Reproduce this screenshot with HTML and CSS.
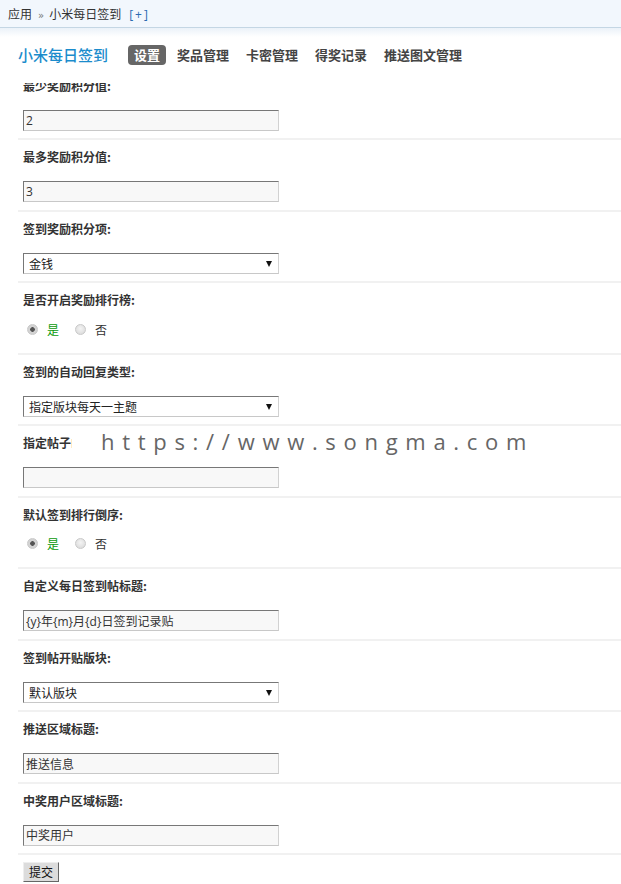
FILE: index.html
```html
<!DOCTYPE html>
<html lang="zh-CN">
<head>
<meta charset="utf-8">
<title>小米每日签到</title>
<link rel="stylesheet" href="styles.css">
</head>
<body>
<div class="header">
  <div class="crumb">应用<span class="sep">»</span>小米每日签到<a class="add">[+]</a></div>
  <div class="titlebar">
    <h3 class="title">小米每日签到</h3>
    <ul class="tabs">
      <li class="tab on">设置</li>
      <li class="tab">奖品管理</li>
      <li class="tab">卡密管理</li>
      <li class="tab">得奖记录</li>
      <li class="tab">推送图文管理</li>
    </ul>
  </div>
</div>

<form class="main">
  <div class="row">
    <div class="lbl">最少奖励积分值:</div>
    <div class="fld"><input class="txt" type="text" value="2"></div>
  </div>
  <div class="row">
    <div class="lbl">最多奖励积分值:</div>
    <div class="fld"><input class="txt" type="text" value="3"></div>
  </div>
  <div class="row">
    <div class="lbl">签到奖励积分项:</div>
    <div class="fld"><span class="sel"><select><option>金钱</option></select></span></div>
  </div>
  <div class="row">
    <div class="lbl">是否开启奖励排行榜:</div>
    <div class="fld radios">
      <label class="opt checked"><input type="radio" name="r1" checked>是</label>
      <label class="opt"><input type="radio" name="r1">否</label>
    </div>
  </div>
  <div class="row">
    <div class="lbl">签到的自动回复类型:</div>
    <div class="fld"><span class="sel"><select><option>指定版块每天一主题</option></select></span></div>
  </div>
  <div class="row">
    <div class="lbl">指定帖子ID:</div>
    <div class="fld"><input class="txt" type="text" value=""></div>
  </div>
  <div class="row">
    <div class="lbl">默认签到排行倒序:</div>
    <div class="fld radios">
      <label class="opt checked"><input type="radio" name="r2" checked>是</label>
      <label class="opt"><input type="radio" name="r2">否</label>
    </div>
  </div>
  <div class="row">
    <div class="lbl">自定义每日签到帖标题:</div>
    <div class="fld"><input class="txt" type="text" value="{y}年{m}月{d}日签到记录贴"></div>
  </div>
  <div class="row">
    <div class="lbl">签到帖开贴版块:</div>
    <div class="fld"><span class="sel"><select><option>默认版块</option></select></span></div>
  </div>
  <div class="row">
    <div class="lbl">推送区域标题:</div>
    <div class="fld"><input class="txt" type="text" value="推送信息"></div>
  </div>
  <div class="row">
    <div class="lbl">中奖用户区域标题:</div>
    <div class="fld"><input class="txt" type="text" value="中奖用户"></div>
  </div>
  <div class="btnrow"><button class="btn" type="button">提交</button></div>
</form>

<div class="wm">https://www.songma.com</div>
</body>
</html>
```

FILE: styles.css
```css
html, body {
  margin: 0;
  padding: 0;
  background: #fff;
}
body {
  font-family: "Noto Sans CJK SC", "Open Sans", sans-serif;
  font-size: 12px;
  color: #333;
  position: relative;
  min-height: 884px;
}

/* header (fixed, lies over the scrolled form) */
.header {
  position: fixed;
  top: 0;
  left: 0;
  right: 0;
  height: 83px;
  background: #fff;
  z-index: 5;
}
.crumb {
  height: 27px;
  line-height: 27px;
  padding-left: 8px;
  background: #f2f7fd;
  border-bottom: 1px solid #c4d6e4;
  color: #333;
  font-size: 12px;
}
.crumb .sep {
  margin: 0 5px 0 6px;
  color: #777;
  font-family: "DejaVu Sans", sans-serif;
  font-size: 10px;
}
.crumb .add {
  margin-left: 8px;
  color: #2a6bb0;
  font-family: "Open Sans", sans-serif;
  letter-spacing: 2px;
}
.titlebar {
  height: 55px;
  box-sizing: border-box;
  padding: 17px 0 0 18px;
  display: flex;
  align-items: flex-start;
  background: linear-gradient(to bottom, #ebf2f9 0, #ffffff 9px);
}
.title {
  margin: 0 20px 0 0;
  height: 20px;
  line-height: 20px;
  font-size: 15px;
  font-weight: 500;
  color: #1b8ccc;
}
.tabs {
  list-style: none;
  margin: 0;
  padding: 0;
  display: flex;
}
.tab {
  height: 20px;
  line-height: 20px;
  padding: 0 6px;
  margin-right: 5px;
  font-size: 13px;
  font-weight: bold;
  color: #444;
  border-radius: 4px;
}
.tab.on {
  background: #666;
  color: #fff;
}

/* form */
.main {
  margin: 0 0 0 18px;
  padding-top: 66.5px;
}
.row {
  height: 71.5px;
  box-sizing: border-box;
  border-top: 2px solid #f1f1f1;
  padding: 9px 0 0 5px;
}
.lbl {
  height: 16px;
  line-height: 16px;
  font-weight: bold;
  color: #333;
  font-size: 12px;
}
.fld {
  margin-top: 16px;
  height: 21px;
}
.txt {
  display: block;
  box-sizing: border-box;
  width: 256px;
  height: 21px;
  margin: 0;
  padding: 0 2px;
  border: 1px solid;
  border-color: #777 #d2d2d2 #c8c8c8 #777;
  background: #f8f8f8;
  font-family: "Open Sans", "Noto Sans CJK SC", sans-serif;
  font-size: 12px;
  color: #333;
  outline: none;
}
.sel {
  position: relative;
  display: block;
  width: 256px;
  height: 21px;
}
.sel select {
  -webkit-appearance: none;
  appearance: none;
  display: block;
  box-sizing: border-box;
  width: 256px;
  height: 21px;
  margin: 0;
  padding: 0 0 0 5px;
  border: 1px solid;
  border-color: #777 #d2d2d2 #c8c8c8 #777;
  border-radius: 0;
  background: #fff;
  font-family: "Noto Sans CJK SC", sans-serif;
  font-size: 12px;
  color: #222;
  outline: none;
}
.sel::after {
  content: "";
  position: absolute;
  right: 7px;
  top: 8px;
  width: 0;
  height: 0;
  border-left: 3.5px solid transparent;
  border-right: 3.5px solid transparent;
  border-top: 6px solid #111;
}
.radios {
  margin-top: 11px;
  height: 20px;
  display: flex;
  align-items: center;
  padding-left: 4px;
}
.opt {
  display: flex;
  align-items: center;
  height: 20px;
  margin-right: 16px;
  color: #333;
  font-size: 12px;
}
.opt.checked {
  color: #0a9a0a;
}
.opt input {
  -webkit-appearance: none;
  appearance: none;
  box-sizing: border-box;
  width: 11px;
  height: 11px;
  margin: 0 9px 0 0;
  border: 1px solid #c9c9c9;
  border-radius: 50%;
  background: radial-gradient(circle at 50% 40%, #f4f4f4 0, #d6d6d6 100%);
}
.opt input:checked {
  background: radial-gradient(circle, #555 0, #555 2px, #d4d4d4 2.6px, #cfcfcf 100%);
}

.btnrow {
  border-top: 2px solid #f1f1f1;
  padding: 7px 0 0 5px;
}
.btn {
  display: block;
  box-sizing: border-box;
  width: 36px;
  height: 20px;
  margin: 0;
  padding: 0;
  border: 1px solid;
  border-color: #eee #666 #666 #eee;
  background: #dcdcdc;
  font-family: "Noto Sans CJK SC", sans-serif;
  font-size: 12px;
  line-height: 16px;
  color: #111;
}

/* watermark overlay */
.wm {
  position: absolute;
  left: 72px;
  top: 426px;
  height: 30px;
  line-height: 30px;
  padding: 0 8px 0 29px;
  background: #fff;
  font-family: "Open Sans", sans-serif;
  font-size: 22px;
  letter-spacing: 7.7px;
  color: #666;
  white-space: nowrap;
  z-index: 3;
}
```
